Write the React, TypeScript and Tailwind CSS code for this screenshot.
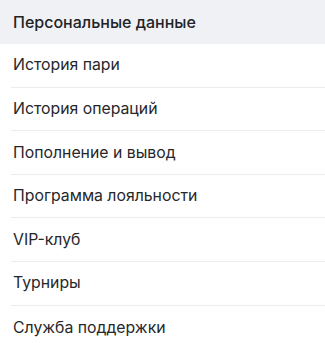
import React from "react";

const items = [
  "История пари",
  "История операций",
  "Пополнение и вывод",
  "Программа лояльности",
  "VIP-клуб",
  "Турниры",
  "Служба поддержки",
];

export default function App() {
  return (
    <div className="w-[325px] h-[349px] bg-white overflow-hidden" style={{ fontFamily: "Inter, 'Noto Sans', sans-serif" }}>
      <div className="h-[44px] bg-[#f0f1f5] flex items-center pl-[13px] text-[16px] font-medium text-[#222326]">
        Персональные данные
      </div>
      <div className="pl-[11px]">
        {items.map((t, i) => (
          <div
            key={t}
            className={`h-[43.6px] flex items-center pl-[2px] text-[15.8px] text-[#26272b] ${i < items.length - 1 ? "border-b border-[#ececef]" : ""}`}
          >
            {t}
          </div>
        ))}
      </div>
    </div>
  );
}
